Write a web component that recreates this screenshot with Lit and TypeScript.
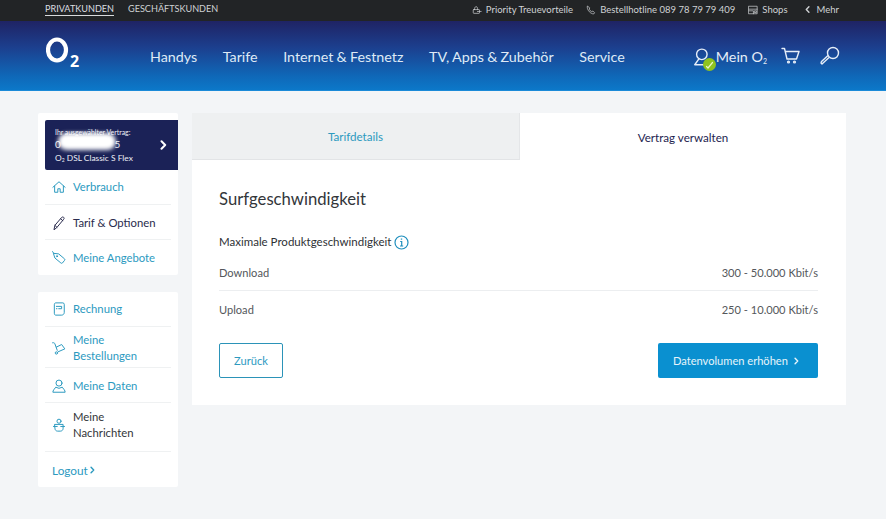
import { LitElement, html, css, svg } from "lit";
import { customElement } from "lit/decorators.js";

const ic = (body: unknown, size = 16, cls = "") => html`<svg class=${cls} width=${size} height=${size} viewBox="0 0 24 24" fill="none" stroke="currentColor" stroke-width="1.700" stroke-linecap="round" stroke-linejoin="round">${body}</svg>`;

const chevron = (cls = "") => html`<svg class=${cls} viewBox="0 0 7 10" fill="none" stroke="currentColor" stroke-width="2" stroke-linecap="round" stroke-linejoin="round"><path d="M1.500 1.200 5.200 5 1.500 8.800"/></svg>`;

const icons = {
  home: svg`<path d="M1.500 12.500 12 3l10.500 9.500"/><path d="M4.500 10.500V21h5.500v-6h4v6h5.500V10.500"/>`,
  pen: svg`<path d="M3.500 23l1.500-7L16.500 2.500c1-1 2.500-1 3.500-.2s1 2.400 0 3.400L8.500 19.500z"/><path d="M5 16l3.500 3.500M15 5l3.500 3"/>`,
  tag: svg`<path d="M3 4l8.500 1 10 8.500c.8.8.8 1.800 0 2.600l-3.600 4.400c-.8.8-1.900.8-2.700 0L5.500 12.500z"/><circle cx="8.500" cy="9" r="1"/><path d="M3 4 1 1"/>`,
  bill: svg`<path d="M4 4c0-1.500 1-2.500 2.500-2.500h12c1.500 0 2.500 1 2.500 2.500v14c0 2.500-2 4.500-4.500 4.500h-10c-1.500 0-2.500-1-2.500-2.500z"/><path d="M7.500 7.500h9v4h-5M7.500 11.500h1"/>`,
  cart: svg`<path d="M1 3c2.500-.5 3.500.5 4 2l4 11"/><path d="M7.500 10.500l9-4.500 5.500 7.500-11.500 5"/><circle cx="7.500" cy="20.500" r="2"/>`,
  user: svg`<circle cx="12" cy="7" r="5.200"/><path d="M1.500 22c0-1 .5-2 1.500-3.500l3.500-4.500 5.500 2 5.500-2 3.500 4.500c1 1.500 1.500 2.500 1.500 3.500z"/>`,
  msg: svg`<circle cx="12" cy="5.500" r="3.500"/><path d="M5 11h14v7c0 2.500-2 4.500-4.500 4.500h-5C7 22.500 5 20.500 5 18z"/><path d="M2.500 14.500H9M15 14.500h6.500"/>`,
  gift: svg`<rect x="3" y="11" width="15" height="9" rx="1.500"/><path d="M6 11c0-4 1-7 4-7s3.500 3 3.500 7M13 15.500h9"/>`,
  phone: svg`<path d="M4 3 9 7 7.500 10c1 2.500 3.500 5 6 6l3-1.500 4 4-2 3c-7 0-15.500-8.500-15.500-15.500z"/>`,
  shop: svg`<rect x="2" y="3" width="20" height="18"/><path d="M2 10h20M2 14h11v7M16 14h4v4h-4z"/>`,
};

const nav = ["Handys", "Tarife", "Internet & Festnetz", "TV, Apps & Zubehör", "Service"];

@customElement("app-root")
export class AppRoot extends LitElement {
  static styles = css`
    :host {
      display: block;
      width: 886px;
      height: 519px;
      overflow: hidden;
      background: #f3f5f7;
      font-family: Lato, "Noto Sans", sans-serif;
      font-size: 11.200px;
      color: #3b3f44;
    }
    a { color: inherit; text-decoration: none; }
    svg { display: block; flex: none; }
    .chev { width: 5px; height: 8px; }

    .top {
      height: 21px;
      background: #222426;
      color: #cfd2d4;
      font-size: 9.100px;
      display: flex;
      align-items: center;
      padding: 0 47px 0 45px;
      box-sizing: border-box;
    }
    .top .seg { padding: 0 0 2px; margin: 0 14px 3px 0; }
    .top .seg.on { border-bottom: 1px solid #d8dadc; color: #dcdee0; padding-bottom: 1px; }
    .top .links { margin: 0 0 2px auto; display: flex; align-items: center; gap: 13px; font-size: 9.500px; }
    .top .l { display: flex; align-items: center; gap: 4px; }
    .top .more { gap: 7px; margin-left: 4px; }
    .top .more svg { transform: scaleX(-1); width: 5px; height: 7px; }

    .head {
      height: 70px;
      box-sizing: border-box;
      background: linear-gradient(180deg, #1f2364 0%, #1c3f8e 38%, #0f68b8 80%, #0c78c9 100%);
      border-bottom: 1px solid #1a8ad8;
      display: flex;
      align-items: center;
      padding: 0 46px;
      color: #dfeaf6;
    }
    .logo { width: 104px; height: 40px; margin-top: 1px; color: #fff; font-weight: 700; position: relative; flex: none; }
    .logo svg { position: absolute; left: 0; top: 0; }
    .logo b { position: absolute; left: 24px; top: 17px; font-size: 16px; line-height: 16px; font-weight: 700; font-family: "Noto Sans", sans-serif; }
    nav { display: flex; gap: 25.500px; font-size: 14.300px; word-spacing: -0.400px; margin-top: 2px; }
    .acts { margin-left: auto; display: flex; align-items: center; color: #e6eef8; }
    .acct { position: relative; margin-right: 2px; }
    .badge {
      position: absolute;
      right: -5px;
      bottom: -5px;
      width: 13px;
      height: 13px;
      border-radius: 50%;
      background: #8fc31f;
      color: #e8f5c8;
    }
    .mein { font-size: 14.300px; margin: 2px 14px 0 3px; }
    .mein sub { font-size: 7px; vertical-align: -2px; line-height: 0; }
    .cart { margin-right: 20px; }

    .page {
      display: flex;
      align-items: flex-start;
      gap: 14px;
      padding: 22px 40px 0 38px;
    }
    .side { width: 140px; flex: none; display: flex; flex-direction: column; gap: 17px; }
    .card { background: #fff; border-radius: 2px; }
    .c1 { padding: 7px 0 0 7px; height: 162px; box-sizing: border-box; }
    .contract {
      display: block;
      height: 50px;
      background: #1b2257;
      border-radius: 2px 0 0 2px;
      color: #eef0f6;
      position: relative;
      box-sizing: border-box;
      padding: 8px 0 0 10px;
      overflow: hidden;
    }
    .contract .cap { font-size: 6.900px; line-height: 9px; display: block; }
    .contract .num { font-size: 10px; line-height: 13px; display: block; height: 13px; margin-top: 1px; }
    .contract .tar { font-size: 8.400px; line-height: 12px; display: block; margin-top: 1px; }
    .contract .tar sub { font-size: 5px; line-height: 0; vertical-align: -1px; }
    .blob {
      position: absolute;
      left: 13px;
      top: 13px;
      width: 58px;
      height: 17px;
      background: #fff;
      border-radius: 9px;
      filter: blur(2px);
    }
    .contract .go { position: absolute; right: 11px; top: 20px; color: #fff; width: 7px; height: 10px; }
    .item {
      display: flex;
      align-items: center;
      gap: 7px;
      color: #2c9abf;
      font-size: 11.300px;
      line-height: 16px;
      border-bottom: 1px solid #eff1f2;
      margin-right: 7px;
      box-sizing: border-box;
    }
    .item svg { margin-left: 7px; }
    .item.dark { color: #2a2c4e; }
    .item.black { color: #33363a; }
    .item.msg svg { color: #2c9abf; }
    .item:last-child { border-bottom: none; }
    .h35 { height: 35px; }
    .h41 { height: 41px; }
    .h49 { height: 49px; }
    .low { padding-top: 1px; }
    .lower { padding-top: 2px; }
    .msg { padding-bottom: 4px; }
    .c2 { height: 195px; padding: 0 0 0 7px; box-sizing: border-box; }
    .logout {
      display: flex;
      align-items: center;
      gap: 2px;
      height: 35px;
      color: #2c9abf;
      font-size: 11.800px;
      padding: 1px 0 0 7px;
      box-sizing: border-box;
    }

    .main { width: 654px; flex: none; background: #fff; height: 292px; }
    .tabs { display: flex; height: 47px; }
    .tab {
      flex: 1;
      display: flex;
      align-items: center;
      justify-content: center;
      font-size: 11.600px;
    }
    .tab.off { background: #eef0f1; color: #2c9abf; border-bottom: 1px solid #e2e4e6; border-right: 1px solid #e4e6e8; box-sizing: border-box; flex: none; width: 328px; }
    .tab.on { color: #1e2450; padding-top: 2px; }
    .body { padding: 27px 28px 0 27px; }
    h1 { margin: 0; font-weight: 400; font-size: 16.700px; line-height: 24px; color: #33363a; }
    .sub {
      display: flex;
      align-items: center;
      gap: 3px;
      margin-top: 23px;
      font-size: 11.500px;
      line-height: 16px;
      color: #2e3135;
    }
    .sub .i { color: #1f8fbd; }
    .row {
      display: flex;
      justify-content: space-between;
      align-items: center;
      font-size: 11.100px;
      color: #54575b;
      height: 36px;
    }
    .row.first { border-bottom: 1px solid #eceef0; height: 37px; margin-top: 4px; box-sizing: border-box; }
    .btns { display: flex; justify-content: space-between; margin-top: 16px; }
    .btn {
      height: 35px;
      box-sizing: border-box;
      border-radius: 2px;
      display: flex;
      align-items: center;
      font-size: 11.100px;
    }
    .back { width: 64px; justify-content: center; border: 1px solid #2b93b8; color: #2c9abf; }
    .primary { width: 160px; background: #0a90d0; color: #e6f4fb; padding-left: 15px; gap: 6px; }
  `;

  render() {
    return html`
      <div class="top">
        <a class="seg on" href="#">PRIVATKUNDEN</a>
        <a class="seg" href="#">GESCHÄFTSKUNDEN</a>
        <div class="links">
          <a class="l" href="#">${ic(icons.gift, 10)}Priority Treuevorteile</a>
          <a class="l" href="#">${ic(icons.phone, 10)}Bestellhotline 089 78 79 79 409</a>
          <a class="l" href="#">${ic(icons.shop, 10)}Shops</a>
          <a class="l more" href="#">${chevron()}Mehr</a>
        </div>
      </div>
      <header class="head">
        <a class="logo" href="#" aria-label="O2">
          <svg width="26" height="30" viewBox="0 0 26 30" fill="none"><ellipse cx="11" cy="14" rx="9" ry="10.500" stroke="#fff" stroke-width="4.200"/></svg>
          <b>2</b>
        </a>
        <nav>${nav.map((n) => html`<a href="#">${n}</a>`)}</nav>
        <div class="acts">
          <span class="acct">
            ${ic(svg`<circle cx="13" cy="10" r="6.300"/><path d="M9.500 15.500 4.500 22.500h14"/>`, 20)}
            <span class="badge">
              <svg width="13" height="13" viewBox="0 0 13 13" fill="none" stroke="currentColor" stroke-width="1.200" stroke-linecap="round"><path d="M3.500 8.500 5 10 9.500 4.500"/></svg>
            </span>
          </span>
          <a class="mein" href="#">Mein O<sub>2</sub></a>
          <span class="cart">
            <svg width="19" height="19" viewBox="0 0 19 19" fill="none" stroke="currentColor" stroke-width="1.400" stroke-linecap="round" stroke-linejoin="round"><path d="M1 2.500h2.500L6 13h9.500l2.500-7.500H4.500"/><circle cx="7.500" cy="16" r=".9"/><circle cx="13.500" cy="16" r=".9"/></svg>
          </span>
          <svg width="20" height="20" viewBox="0 0 20 20" fill="none" stroke="currentColor" stroke-width="1.400" stroke-linejoin="round"><circle cx="13" cy="7" r="5.500"/><path d="M9 11.500 2 18l-1-1 .5-1.500L8 9.500"/></svg>
        </div>
      </header>

      <div class="page">
        <aside class="side">
          <div class="card c1">
            <a class="contract" href="#">
              <span class="cap">Ihr ausgewählter Vertrag:</span>
              <span class="num">0&nbsp;&nbsp;&nbsp;&nbsp;&nbsp;&nbsp;&nbsp;&nbsp;&nbsp;&nbsp;&nbsp;&nbsp;&nbsp;&nbsp;&nbsp;&nbsp;&nbsp;&nbsp;&nbsp;&nbsp;&nbsp;5</span>
              <span class="tar">O<sub>2</sub> DSL Classic S Flex</span>
              <span class="blob"></span>
              ${chevron("go")}
            </a>
            <a class="item h35" href="#">${ic(icons.home, 14)}Verbrauch</a>
            <a class="item h35 dark low" href="#">${ic(icons.pen, 14)}Tarif &amp; Optionen</a>
            <a class="item h35" href="#">${ic(icons.tag, 14)}Meine Angebote</a>
          </div>
          <div class="card c2">
            <a class="item h35" href="#">${ic(icons.bill, 14)}Rechnung</a>
            <a class="item h41 low" href="#">${ic(icons.cart, 14)}<span>Meine<br />Bestellungen</span></a>
            <a class="item h35 lower" href="#">${ic(icons.user, 14)}Meine Daten</a>
            <a class="item h49 black msg" href="#">${ic(icons.msg, 14)}<span>Meine<br />Nachrichten</span></a>
            <a class="logout" href="#">Logout ${chevron("chev")}</a>
          </div>
        </aside>

        <main class="main">
          <div class="tabs">
            <a class="tab off" href="#">Tarifdetails</a>
            <a class="tab on" href="#">Vertrag verwalten</a>
          </div>
          <div class="body">
            <h1>Surfgeschwindigkeit</h1>
            <div class="sub">
              Maximale Produktgeschwindigkeit
              <svg class="i" width="15" height="15" viewBox="0 0 15 15" fill="none" stroke="currentColor" stroke-width="1.200"><circle cx="7.500" cy="7.500" r="6.500"/><path d="M6.200 6.500h1.500V11M6 11h3.200"/><path d="M7.500 3.500v1.200" stroke-width="1.400"/></svg>
            </div>
            <div class="row first"><span>Download</span><span>300 - 50.000 Kbit/s</span></div>
            <div class="row"><span>Upload</span><span>250 - 10.000 Kbit/s</span></div>
            <div class="btns">
              <a class="btn back" href="#">Zurück</a>
              <a class="btn primary" href="#">Datenvolumen erhöhen ${chevron("chev")}</a>
            </div>
          </div>
        </main>
      </div>
    `;
  }
}
